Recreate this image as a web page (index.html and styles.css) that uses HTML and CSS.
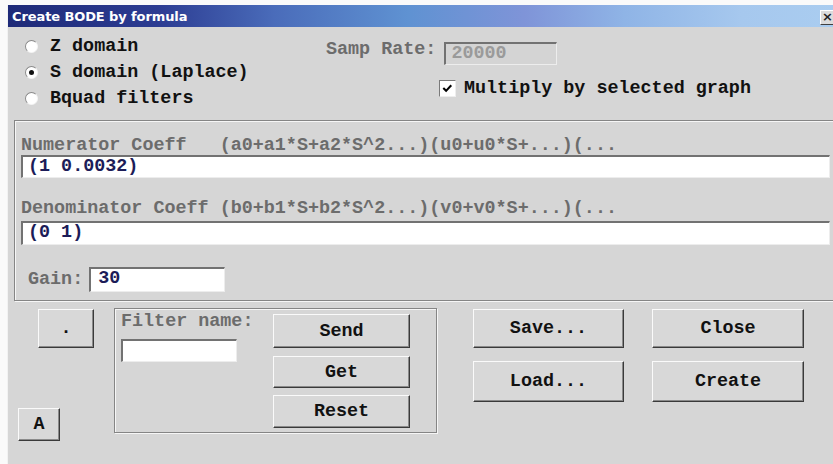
FILE: index.html
```html
<!DOCTYPE html>
<html>
<head>
<meta charset="utf-8">
<title>Create BODE by formula</title>
<link rel="stylesheet" href="styles.css">
</head>
<body>
<div class="window">
  <div class="titlebar">
    <span class="title">Create BODE by formula</span>
    <span class="close">&#215;</span>
  </div>
  <div class="client">
    <div class="top">
      <div class="domains">
        <div class="radio-row"><span class="radio"></span>Z domain</div>
        <div class="radio-row"><span class="radio on"></span>S domain (Laplace)</div>
        <div class="radio-row"><span class="radio"></span>Bquad filters</div>
      </div>
      <div class="options">
        <div class="rate-row">
          <span class="label dim">Samp Rate:</span>
          <span class="field disabled">20000</span>
        </div>
        <div class="check-row">
          <span class="check"><svg viewBox="0 0 16 16" width="16" height="16"><polyline points="3.5,7.5 6.5,10.5 12,4.5" fill="none" stroke="#000" stroke-width="2.2"/></svg></span>
          <span>Multiply by selected graph</span>
        </div>
      </div>
    </div>

    <div class="group coeffs">
      <div class="label dim coeff-label">Numerator Coeff   (a0+a1*S+a2*S^2...)(u0+u0*S+...)(...</div>
      <div class="field wide">(1 0.0032)</div>
      <div class="label dim coeff-label second">Denominator Coeff (b0+b1*S+b2*S^2...)(v0+v0*S+...)(...</div>
      <div class="field wide tall">(0 1)</div>
      <div class="gain-row">
        <span class="label dim">Gain:</span>
        <span class="field gain">30</span>
      </div>
    </div>

    <div class="bottom">
      <div class="side">
        <button class="btn dot-btn">.</button>
        <button class="btn a-btn">A</button>
      </div>
      <div class="group filter">
        <div class="filter-name">
          <div class="label dim">Filter name:</div>
          <div class="field name"></div>
        </div>
        <div class="filter-actions">
          <button class="btn send">Send</button>
          <button class="btn get">Get</button>
          <button class="btn reset">Reset</button>
        </div>
      </div>
      <div class="actions">
        <button class="btn">Save...</button>
        <button class="btn">Close</button>
        <button class="btn tall-btn">Load...</button>
        <button class="btn tall-btn">Create</button>
      </div>
    </div>
  </div>
</div>
</body>
</html>
```

FILE: styles.css
```css
html, body {
  margin: 0;
  padding: 0;
  background: #fafafa;
  overflow: hidden;
}

body {
  width: 833px;
  height: 464px;
}

.window {
  margin: 5px 0 0 7px;
  width: 833px;
  height: 459px;
  background: #d6d6d6;
  border-left: 1px solid #f2f2f2;
  display: flex;
  flex-direction: column;
  font-family: "Liberation Mono", "Courier New", monospace;
  font-weight: bold;
  font-size: 18.4px;
  color: #111;
}

/* caption bar */
.titlebar {
  height: 22px;
  display: flex;
  align-items: center;
  padding: 0 6px 0 4px;
  background: linear-gradient(90deg, #1e2a78 0%, #2c3c92 18%, #4a6cba 32%, #5f92d2 48%, #7f94d8 62%, #8fb4e6 74%, #a6c8ee 88%, #aacdf0 100%);
}

.title {
  font-family: "DejaVu Sans", Verdana, sans-serif;
  font-size: 13px;
  font-weight: bold;
  color: #fff;
  letter-spacing: -0.1px;
}

.close {
  margin-left: auto;
  width: 13px;
  height: 13px;
  margin-top: 3px;
  background: #dcdcdc;
  border: 1px solid;
  border-color: #fff #404040 #404040 #fff;
  font-family: "DejaVu Sans", sans-serif;
  font-size: 13px;
  line-height: 12px;
  text-align: center;
  color: #222;
}

.client {
  flex: 1;
  display: flex;
  flex-direction: column;
}

/* domain selection and rate */
.top {
  display: flex;
  padding: 7px 0 0 17px;
}

.domains {
  width: 301px;
}

.radio-row {
  display: flex;
  align-items: center;
  height: 26px;
  line-height: 26px;
}

.radio {
  width: 11px;
  height: 11px;
  border-radius: 50%;
  background: #fff;
  border: 1px solid;
  border-color: #8a8a8a #f4f4f4 #f4f4f4 #8a8a8a;
  margin-right: 12px;
  margin-top: -1px;
  position: relative;
  flex: none;
}

.radio.on::after {
  content: "";
  position: absolute;
  left: 3px;
  top: 3px;
  width: 5px;
  height: 5px;
  border-radius: 50%;
  background: #111;
}

.label {
  white-space: pre;
}

.dim {
  color: #6c6c6c;
}

.options {
  display: flex;
  flex-direction: column;
}

.rate-row {
  display: flex;
  align-items: flex-start;
  margin-top: 8px;
}

.rate-row .label {
  line-height: 26px;
  margin-top: -5px;
  margin-right: 8px;
}

.field {
  box-sizing: border-box;
  display: block;
  background: #fff;
  border-style: solid;
  border-width: 2px 1px 1px 2px;
  border-color: #727272 #ededed #ededed #727272;
  color: #1c1c58;
  padding-left: 5px;
  line-height: 20px;
  white-space: pre;
}

.field.disabled {
  width: 113px;
  height: 23px;
  background: #d4d4d4;
  color: #9a9a9a;
}

.check-row {
  display: flex;
  align-items: center;
  height: 26px;
  line-height: 26px;
  margin-top: 11px;
  margin-left: 113px;
}

.check {
  box-sizing: border-box;
  width: 17px;
  height: 17px;
  background: #fff;
  border-style: solid;
  border-width: 1px;
  border-color: #7a7a7a #eee #eee #7a7a7a;
  margin-right: 8px;
  margin-top: -1px;
  display: flex;
}

.check svg {
  width: 15px;
  height: 15px;
}

/* etched group frames */
.group {
  box-sizing: border-box;
  border: 1px solid #858585;
  box-shadow: 1px 1px 0 #f6f6f6, inset 1px 1px 0 #f6f6f6;
}

.coeffs {
  margin: 8px 0 0 6px;
  width: 822px;
  height: 181px;
  padding: 15px 0 0 6px;
}

.coeff-label {
  line-height: 19px;
}

.coeff-label.second {
  margin-top: 21px;
}

.field.wide {
  width: 809px;
  height: 23px;
}

.field.wide.tall {
  height: 24px;
  margin-top: 3px;
}

.gain-row {
  display: flex;
  align-items: center;
  margin: 22px 0 0 7px;
}

.gain-row .label {
  margin-right: 6px;
}

.field.gain {
  width: 136px;
  height: 25px;
  padding-left: 7px;
}

/* lower controls */
.bottom {
  display: flex;
  align-items: flex-start;
  padding-top: 7px;
}

.btn {
  box-sizing: border-box;
  font: inherit;
  color: #111;
  background: #d8d8d8;
  border: 1px solid;
  border-color: #fafafa #3a3a3a #3a3a3a #fafafa;
  box-shadow: inset -1px -1px 0 #8a8a8a;
  padding: 0;
  margin: 0;
  text-align: center;
  cursor: default;
}

.side {
  width: 96px;
  margin-left: 10px;
  display: flex;
  flex-direction: column;
  align-items: flex-start;
}

.dot-btn {
  width: 56px;
  height: 39px;
  margin: 1px 0 0 20px;
}

.a-btn {
  width: 42px;
  height: 33px;
  margin-top: 60px;
}

.filter {
  width: 323px;
  height: 125px;
  display: flex;
  padding: 3px 0 0 6px;
}

.filter-name .label {
  line-height: 19px;
}

.field.name {
  width: 116px;
  height: 23px;
  margin-top: 8px;
}

.filter-actions {
  margin-left: auto;
  margin-right: 26px;
  padding-top: 2px;
  display: flex;
  flex-direction: column;
}

.filter-actions .btn {
  width: 137px;
}

.send {
  height: 34px;
}

.get {
  height: 32px;
  margin-top: 8px;
}

.reset {
  height: 33px;
  margin-top: 7px;
}

.actions {
  margin: 1px 0 0 36px;
  display: grid;
  grid-template-columns: 151px 152px;
  grid-template-rows: 39px 41px;
  column-gap: 28px;
  row-gap: 13px;
}
```
